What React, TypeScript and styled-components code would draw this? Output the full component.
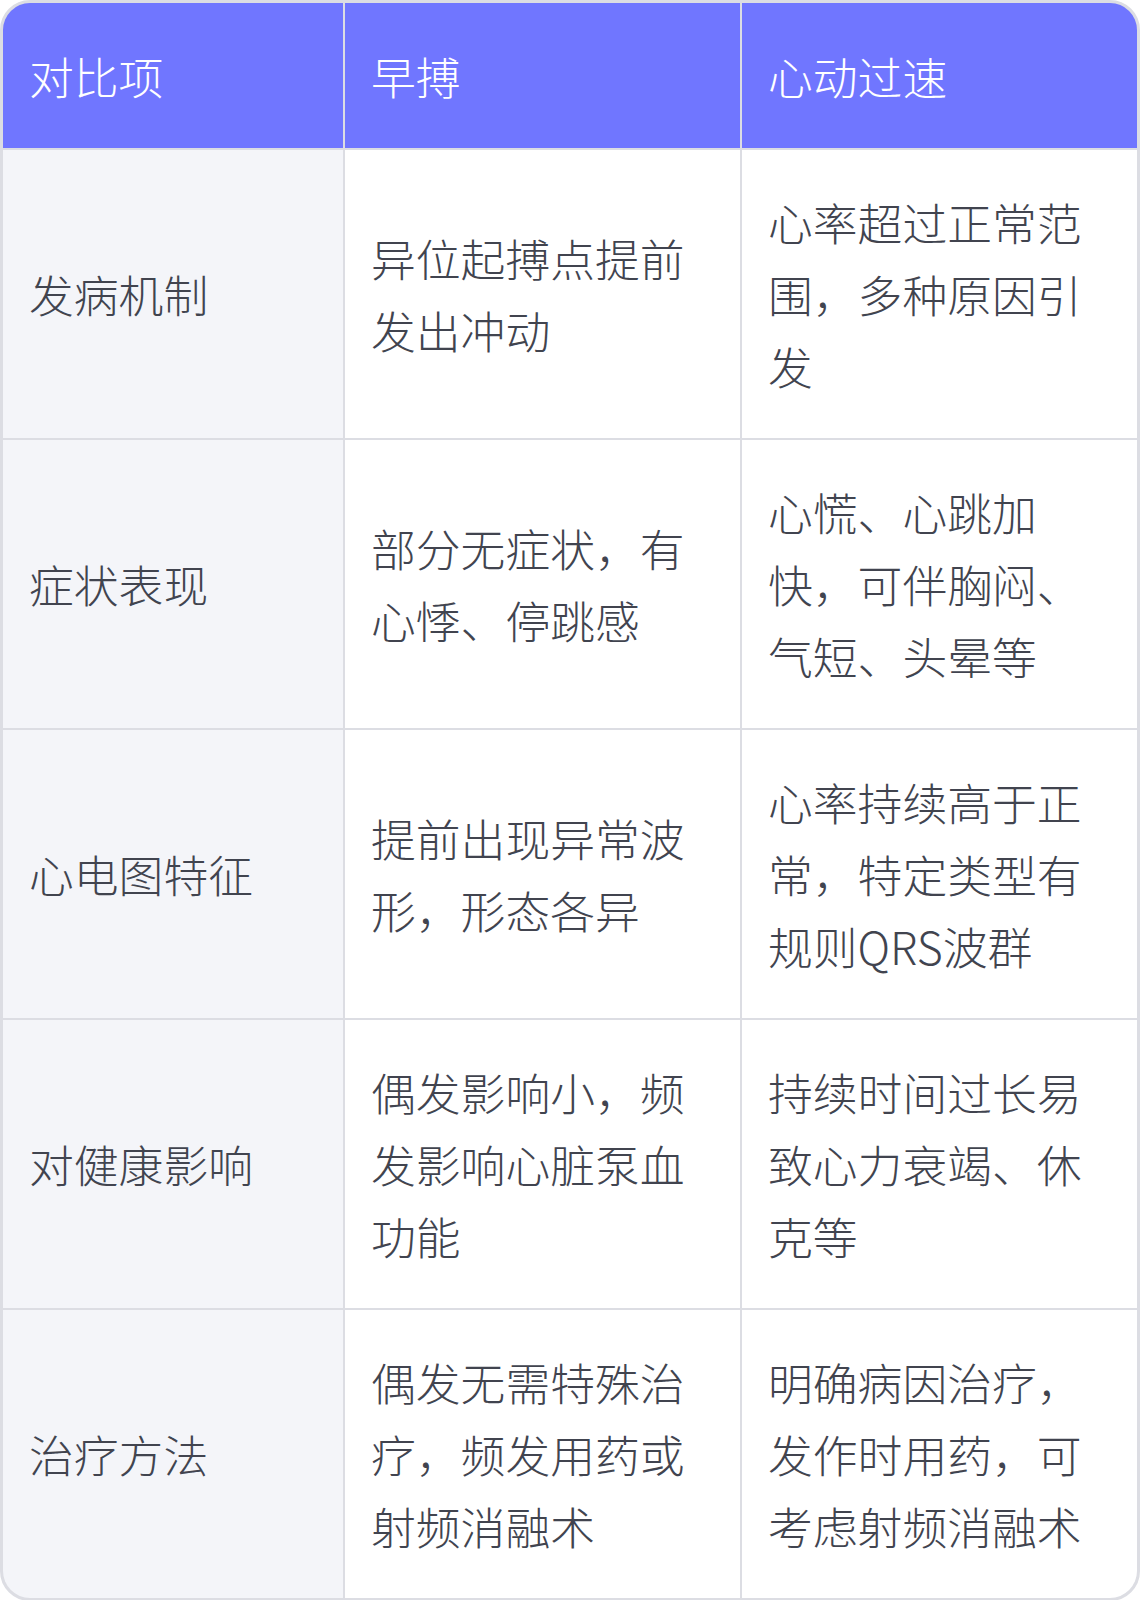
import React from "react";
import styled, { createGlobalStyle } from "styled-components";

const GlobalStyle = createGlobalStyle`
  html, body {
    margin: 0;
    padding: 0;
    background: #ffffff;
  }
  body {
    font-family: "Noto Sans CJK SC", "Noto Sans", sans-serif;
  }
`;

const Table = styled.div`
  box-sizing: border-box;
  width: 1140px;
  display: grid;
  grid-template-columns: 340px 395px 395px;
  gap: 2px;
  background: #dcdde3;
  border: 3px solid #dcdde3;
  border-radius: 30px;
  overflow: hidden;
`;

const Cell = styled.div<{ $variant?: "head" | "label" | "body" }>`
  display: flex;
  align-items: center;
  padding: 36.5px 27px 36.5px 26px;
  font-size: 44.8px;
  line-height: 1.6;
  font-weight: 300;
  word-break: break-all;
  color: ${(p) => (p.$variant === "head" ? "#ffffff" : "#41444f")};
  background: ${(p) =>
    p.$variant === "head" ? "#7076ff" : p.$variant === "label" ? "#f4f5f9" : "#ffffff"};
`;

const headers = ["对比项", "早搏", "心动过速"];

const rows: [string, string, string][] = [
  ["发病机制", "异位起搏点提前发出冲动", "心率超过正常范围，多种原因引发"],
  ["症状表现", "部分无症状，有心悸、停跳感", "心慌、心跳加快，可伴胸闷、气短、头晕等"],
  ["心电图特征", "提前出现异常波形，形态各异", "心率持续高于正常，特定类型有规则QRS波群"],
  ["对健康影响", "偶发影响小，频发影响心脏泵血功能", "持续时间过长易致心力衰竭、休克等"],
  ["治疗方法", "偶发无需特殊治疗，频发用药或射频消融术", "明确病因治疗，发作时用药，可考虑射频消融术"],
];

export default function App() {
  return (
    <>
      <GlobalStyle />
      <Table>
        {headers.map((h) => (
          <Cell key={h} $variant="head">
            {h}
          </Cell>
        ))}
        {rows.map((r) => (
          <React.Fragment key={r[0]}>
            <Cell $variant="label">{r[0]}</Cell>
            <Cell $variant="body">{r[1]}</Cell>
            <Cell $variant="body">{r[2]}</Cell>
          </React.Fragment>
        ))}
      </Table>
    </>
  );
}
